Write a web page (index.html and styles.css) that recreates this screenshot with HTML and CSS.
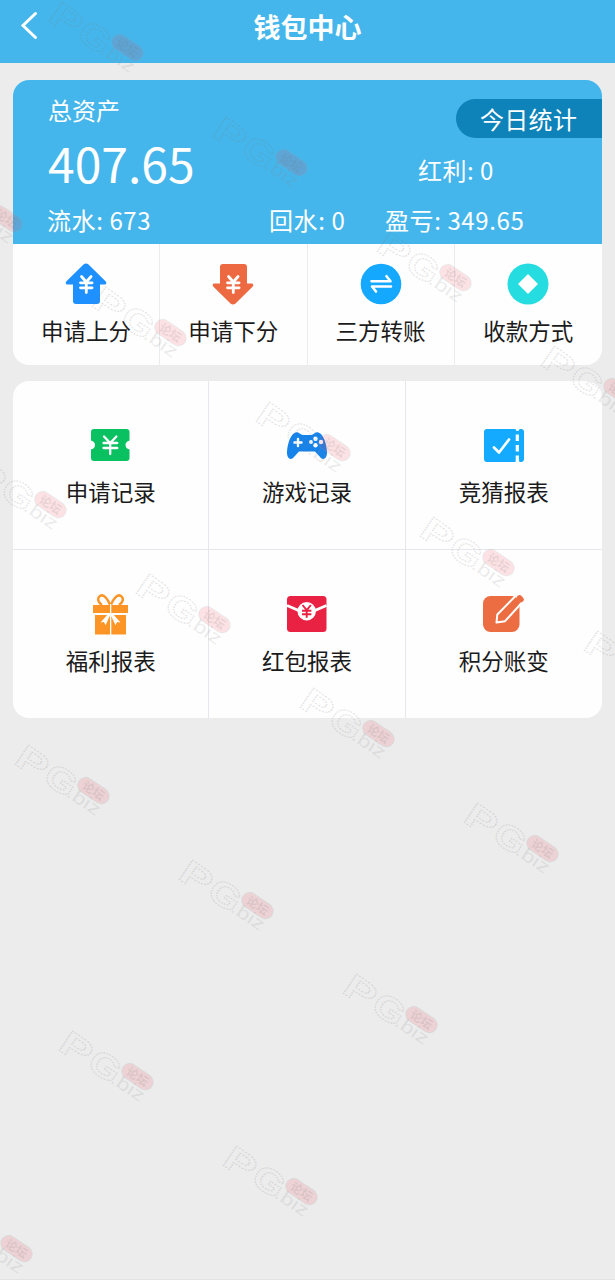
FILE: index.html
```html
<!DOCTYPE html>
<html lang="zh-CN">
<head>
<meta charset="utf-8">
<meta name="viewport" content="width=device-width, initial-scale=1">
<title>钱包中心</title>
<link rel="stylesheet" href="styles.css">
</head>
<body>
<div class="page">
  <header class="header">
    <svg class="back" width="20" height="30" viewBox="0 0 20 30"><path d="M16.500 3.500 4 15.500l12.500 12"/></svg>
    <h1 class="title">钱包中心</h1>
  </header>

  <main class="content">
    <section class="card wallet">
      <div class="summary">
        <div class="top">
          <div class="assets">
            <div class="label">总资产</div>
            <div class="amount">407.65</div>
          </div>
          <div class="side">
            <div class="today">今日统计</div>
            <div class="bonus">红利: 0</div>
          </div>
        </div>
        <div class="stats"><span>流水: 673</span><span>回水: 0</span><span>盈亏: 349.65</span></div>
      </div>
      <nav class="actions">
        <a class="action">
          <svg class="icon" viewBox="0 0 42 42"><path fill="#1e90ff" d="M18.500 1.600q2.500-2 5 0L40.800 18.500q1.500 3-1.500 3H35V38q0 3-3 3H11q-3 0-3-3V21.500H2.700q-3 0-1.500-3z"/><path class="yen" d="m16.500 13.500 4.800 5.500 4.800-5.500M15.500 19.800h11.600M15.500 24.800h11.600M21.300 19v10.500"/></svg>
          <span>申请上分</span>
        </a>
        <a class="action">
          <svg class="icon" viewBox="0 0 42 42"><path fill="#ed6942" d="M18.500 40.400q2.500 2 5 0L40.800 23.500q1.500-3-1.500-3H35V4q0-3-3-3H11Q8 1 8 4v16.500H2.700q-3 0-1.500 3z"/><path class="yen" d="m16.500 13.500 4.800 5.500 4.800-5.500M15.500 19.800h11.600M15.500 24.800h11.600M21.300 19v10.500"/></svg>
          <span>申请下分</span>
        </a>
        <a class="action">
          <svg class="icon" viewBox="0 0 42 42"><circle cx="21" cy="21" r="20.300" fill="#14a8ff"/><path fill="none" stroke="#fff" stroke-width="2.600" stroke-linecap="round" stroke-linejoin="round" d="M11.500 18.200h19l-4-5M31 23.500H12l4 5"/></svg>
          <span>三方转账</span>
        </a>
        <a class="action">
          <svg class="icon" viewBox="0 0 42 42"><circle cx="21" cy="21" r="20.500" fill="#25dce0"/><path fill="#fff" d="m21 11 10 10-10 10-10-10z"/></svg>
          <span>收款方式</span>
        </a>
      </nav>
    </section>

    <nav class="card records">
      <a class="record">
        <svg class="icon" viewBox="0 0 42 42"><path fill="#09c160" d="M4 5h32.500q3 0 3 3v8.500q-4 1-4 4.500t4 4.500V34q0 3-3 3H4q-3 0-3-3v-8.500q4-1 4-4.500t-4-4.500V8q0-3 3-3z"/><path fill="none" stroke="#fff" stroke-width="2.300" stroke-linecap="round" d="m14 12.500 6.200 6.500 6.200-6.500M13.500 19h13.800M13.500 24h13.800M20.200 19v11"/></svg>
        <span>申请记录</span>
      </a>
      <a class="record">
        <svg class="icon" viewBox="0 0 42 42"><path fill="#1683eb" d="M10.500 8.300C13 7.600 14.500 11 17 11h8c2.500 0 4-3.400 6.500-2.700C37 9 40.500 19 41 28c.2 7-4 8.500-6.500 5.500L29 27.500H13l-5.500 6C5 36.500.800 35 1 28 1.500 19 5 9 10.500 8.300z"/><path stroke="#fff" stroke-width="2.400" stroke-linecap="round" d="M12 15v7M8.500 18.500h7"/><g fill="#fff"><circle cx="29.500" cy="14.700" r="2.200"/><circle cx="25" cy="18" r="1.900"/><circle cx="35" cy="18" r="2.200"/><circle cx="29.500" cy="21.300" r="2.200"/></g></svg>
        <span>游戏记录</span>
      </a>
      <a class="record">
        <svg class="icon" viewBox="0 0 42 42"><path fill="#14aaff" d="M4 5h28.500q0 2 2 2t2-2H38q3 0 3 3v27q0 3-3 3h-1.500q0-2-2-2t-2 2H4q-3 0-3-3V8q0-3 3-3z"/><path fill="none" stroke="#fff" stroke-width="2.700" stroke-linecap="round" stroke-linejoin="round" d="m11 23.500 5 5 10-13"/><path stroke="#fff" stroke-width="3.200" d="M34.300 10.500V17M34.300 21v6.500M34.300 31.500V38"/></svg>
        <span>竞猜报表</span>
      </a>
      <a class="record">
        <svg class="icon" viewBox="0 0 42 42"><path fill="#fc9526" d="M3 12h35v8H3zM5 22h31v19.500H5z"/><g fill="none" stroke="#fc9526" stroke-width="2.500"><path d="M20.500 13C17 4 13 1 10 3 6.500 5.500 8.500 10 12 12M20.500 13C24 4 28 1 31 3c3.500 2.500 1.500 7-2 9"/></g><path fill="#fff" d="M20 11h1.300v31H20z"/><path fill="#fff" d="m19 20-8.500 9.500 3.500-.5 1.500 3.200 5-10.700 5 10.700L27 29l3.500.5L22 20z"/></svg>
        <span>福利报表</span>
      </a>
      <a class="record">
        <svg class="icon" viewBox="0 0 42 42"><rect x="1" y="3" width="39.500" height="36" rx="3.500" fill="#e92243"/><path fill="none" stroke="#fff" stroke-width="2.800" d="m1 12.500 14 6M40.500 12.500l-14 6"/><circle cx="20.700" cy="18.200" r="9.200" fill="#fff"/><path fill="none" stroke="#e92243" stroke-width="1.900" d="m16.500 12 4.200 5.200 4.200-5.200M16 17.800h9.400M16 21.300h9.400M20.700 17v7.700"/></svg>
        <span>红包报表</span>
      </a>
      <a class="record">
        <svg class="icon" viewBox="0 0 42 42"><rect x="0" y="3" width="36.500" height="36" rx="7.500" fill="#ed6d43"/><path fill="#ed6d43" stroke="#fff" stroke-width="2" stroke-linejoin="round" d="m13.500 29.500.8-8L33 2.500l6 7-17 18.700z"/><path stroke="#ed6d43" stroke-width="5.500" stroke-linecap="round" d="m36.500 4.800 1.500 1.700"/></svg>
        <span>积分账变</span>
      </a>
    </nav>
  </main>

  <svg class="watermarks" width="615" height="1280" viewBox="0 0 615 1280" aria-hidden="true">
    <defs>
      <g id="mark">
        <g transform="translate(15 22) rotate(34)">
          <text class="mark-letter" x="-2" y="1" textLength="32" lengthAdjust="spacingAndGlyphs">P</text>
          <text class="mark-letter" x="32" y="0" textLength="32" lengthAdjust="spacingAndGlyphs">G</text>
          <text class="mark-suffix" x="60" y="-1" textLength="37" lengthAdjust="spacingAndGlyphs">.biz</text>
          <rect class="mark-pill" x="63" y="-29" width="35" height="16" rx="8"/>
          <text class="mark-forum" x="68.500" y="-16.500">论坛</text>
        </g>
      </g>
    </defs>
    <use href="#mark" x="34" y="-2"/>
    <use href="#mark" x="198" y="113"/>
    <use href="#mark" x="362" y="228"/>
    <use href="#mark" x="526" y="342"/>
    <use href="#mark" x="-87" y="169"/>
    <use href="#mark" x="77" y="283"/>
    <use href="#mark" x="241" y="398"/>
    <use href="#mark" x="405" y="513"/>
    <use href="#mark" x="569" y="627"/>
    <use href="#mark" x="-43" y="455"/>
    <use href="#mark" x="121" y="570"/>
    <use href="#mark" x="285" y="684"/>
    <use href="#mark" x="449" y="799"/>
    <use href="#mark" x="0" y="741"/>
    <use href="#mark" x="164" y="856"/>
    <use href="#mark" x="328" y="970"/>
    <use href="#mark" x="44" y="1027"/>
    <use href="#mark" x="208" y="1142"/>
    <use href="#mark" x="-77" y="1199"/>
  </svg>
</div>
</body>
</html>
```

FILE: styles.css
```css
* { box-sizing: border-box; }

body {
  margin: 0;
  font-family: "Noto Sans CJK SC", sans-serif;
  color: #1b1b1b;
  background: #ececec;
}

.page {
  position: relative;
  height: 1280px;
  overflow: hidden;
  border-bottom: 1px solid #e2e2e2;
}

.header {
  display: grid;
  grid-template-columns: 40px 1fr 40px;
  align-items: start;
  height: 63px;
  padding: 10px 0 0;
  color: #fff;
  background: #45b6eb;
}

.back {
  margin-left: 19px;
  fill: none;
  stroke: #fff;
  stroke-width: 3;
  stroke-linecap: round;
}

.title {
  margin: 0;
  font-size: 27px;
  font-weight: 700;
  line-height: 34px;
  text-align: center;
}

.content {
  display: flex;
  flex-direction: column;
  gap: 16px;
  padding: 17px 13px 0;
}

.card {
  overflow: hidden;
  border-radius: 16px;
  background: #fefefe;
}

.summary {
  height: 164px;
  color: #fff;
  background: #45b6eb;
  font-size: 24px;
  line-height: 34px;
}

.top {
  display: flex;
  justify-content: space-between;
  height: 123px;
  padding: 13px 0 0 35px;
}

.amount {
  margin-top: 5px;
  font-size: 48px;
  line-height: 60px;
}

.side {
  width: 184px;
  padding-top: 6px;
}

.today {
  width: 146px;
  height: 39px;
  margin-left: auto;
  padding-left: 24px;
  border-radius: 20px 0 0 20px;
  background: #0e83b9;
  letter-spacing: 0.3px;
  line-height: 39px;
}

.bonus {
  margin-top: 15px;
  letter-spacing: 0.5px;
}

.stats {
  display: grid;
  grid-template-columns: 222px 116px 1fr;
  padding-left: 34px;
  letter-spacing: 0.6px;
}

.actions {
  display: grid;
  grid-template-columns: repeat(4, 1fr);
  height: 121px;
}

.action,
.record {
  display: flex;
  flex-direction: column;
  align-items: center;
  font-size: 22.5px;
  line-height: 32px;
}

.action {
  gap: 9px;
  padding-top: 19px;
  border-right: 1px solid #e9ebee;
}

.action:last-child { border-right: 0; }

.icon {
  width: 42px;
  height: 42px;
}

.yen {
  fill: none;
  stroke: #fff;
  stroke-width: 2.8;
  stroke-linecap: round;
}

.records {
  display: grid;
  grid-template-columns: repeat(3, 1fr);
  grid-template-rows: 168.5px 168px;
}

.record {
  gap: 9px;
  padding-top: 43px;
  border-right: 1px solid #e6e7ec;
  border-bottom: 1px solid #e6e7ec;
}

.record:nth-child(3n) { border-right: 0; }
.record:nth-child(n + 4) { border-bottom: 0; }

.watermarks {
  position: absolute;
  inset: 0;
  pointer-events: none;
}

.mark-letter {
  font: 700 34px "Liberation Sans", sans-serif;
  fill: none;
  stroke: #777;
  stroke-opacity: 0.2;
  stroke-width: 1.2;
  stroke-dasharray: 1.6 1;
}

.mark-suffix {
  font: 18px "Liberation Sans", sans-serif;
  fill: #888;
  fill-opacity: 0.16;
}

.mark-pill {
  fill: #f04450;
  fill-opacity: 0.15;
  stroke: #70d8d0;
  stroke-opacity: 0.12;
}

.mark-forum {
  font: 700 12px "Noto Sans CJK SC", sans-serif;
  fill: #777;
  fill-opacity: 0.16;
}
```
